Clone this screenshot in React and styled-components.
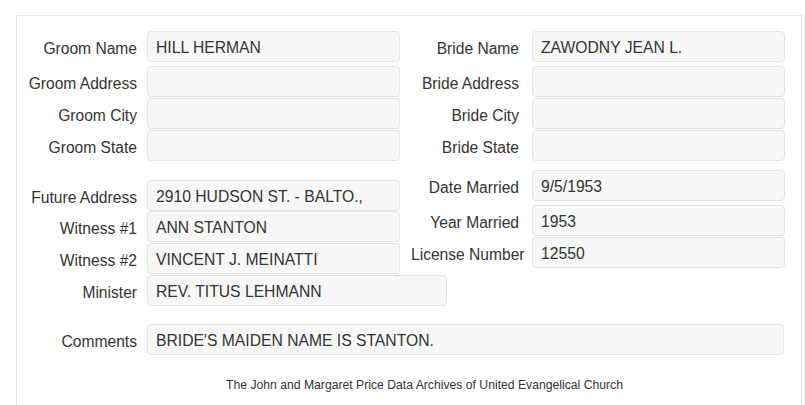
import React from "react";
import styled, { createGlobalStyle } from "styled-components";

const GlobalStyle = createGlobalStyle`
  body {
    margin: 0;
    background: #fff;
    font-family: "Liberation Sans", Arial, sans-serif;
    color: #333;
  }
`;

const Panel = styled.div`
  margin: 15px 0 0 16px;
  width: 786px;
  height: 400px;
  border: 1px solid #e3e3e3;
  border-bottom: none;
  box-sizing: border-box;
  padding-top: 15px;
`;

const Columns = styled.div`
  display: flex;
  align-items: flex-start;
`;

const Column = styled.div`
  width: ${(p) => p.w}px;
  margin-top: ${(p) => p.top || 0}px;
  padding-left: ${(p) => p.pl || 0}px;
  box-sizing: border-box;
  display: flex;
  flex-direction: column;
`;

const Row = styled.div`
  display: grid;
  grid-template-columns: ${(p) => p.lw}px ${(p) => p.iw || 253}px;
  column-gap: ${(p) => p.gap || 10}px;
  align-items: center;
  margin-top: ${(p) => p.mt || 0}px;
`;

const Label = styled.label`
  text-align: right;
  font-size: 15.6px;
  white-space: nowrap;
  color: #333;
  padding-top: 4px;
`;

const Field = styled.div`
  height: 31px;
  box-sizing: border-box;
  background: #f7f7f7;
  border: 1px solid #e3e3e3;
  border-radius: 4px;
  padding: 1px 8px 0;
  font-size: 15.7px;
  line-height: 29px;
  color: #333;
  white-space: nowrap;
  overflow: hidden;
`;

const Footer = styled.p`
  margin: 23px 0 0;
  padding-left: 31px;
  text-align: center;
  font-size: 12.2px;
  color: #333;
`;

const groom = [
  ["Groom Name", "HILL HERMAN", 0],
  ["Groom Address", "", 4],
  ["Groom City", "", 1],
  ["Groom State", "", 1],
];

const bride = [
  ["Bride Name", "ZAWODNY JEAN L.", 0],
  ["Bride Address", "", 4],
  ["Bride City", "", 1],
  ["Bride State", "", 1],
];

const extraLeft = [
  ["Future Address", "2910 HUDSON ST. - BALTO.,", 0],
  ["Witness #1", "ANN STANTON", 0],
  ["Witness #2", "VINCENT J. MEINATTI", 1],
];

const extraRight = [
  ["Date Married", "9/5/1953", 0],
  ["Year Married", "1953", 4],
  ["License Number", "12550", 1],
];

function Fields({ rows, lw, gap }) {
  return rows.map(([label, value, mt]) => (
    <Row key={label} lw={lw} gap={gap} mt={mt}>
      <Label>{label}</Label>
      <Field>{value}</Field>
    </Row>
  ));
}

export default function App() {
  return (
    <>
      <GlobalStyle />
      <Panel>
        <Columns>
          <Column w={383}>
            <Fields rows={groom} lw={120} />
          </Column>
          <Column w={386} pl={11}>
            <Fields rows={bride} lw={108} gap={13} />
          </Column>
        </Columns>
        <Columns>
          <Column w={383} top={19}>
            <Fields rows={extraLeft} lw={120} />
            <Row lw={120} iw={300} mt={1}>
              <Label>Minister</Label>
              <Field>REV. TITUS LEHMANN</Field>
            </Row>
          </Column>
          <Column w={386} top={9} pl={11}>
            <Fields rows={extraRight} lw={108} gap={13} />
          </Column>
        </Columns>
        <Row lw={120} iw={637} mt={18}>
          <Label>Comments</Label>
          <Field>BRIDE'S MAIDEN NAME IS STANTON.</Field>
        </Row>
        <Footer>
          The John and Margaret Price Data Archives of United Evangelical Church
        </Footer>
      </Panel>
    </>
  );
}
